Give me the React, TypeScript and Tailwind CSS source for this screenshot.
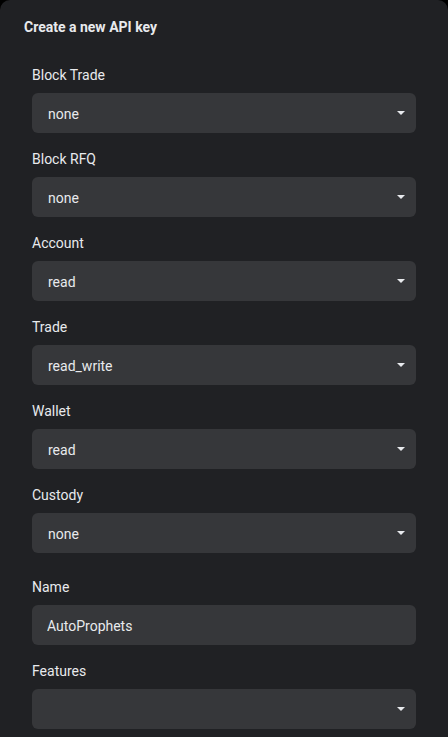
import { useState } from "react";

const PERMS = ["none", "read", "read_write"];

function Caret() {
  return (
    <svg className="w-2 h-1" viewBox="0 0 8 4" fill="currentColor">
      <path d="M0 0h8L4 4z" />
    </svg>
  );
}

function SelectField({ label, value }: { label: string; value: string }) {
  const [val, setVal] = useState(value);
  return (
    <div className="flex flex-col">
      <label className="h-5 pt-px text-sm leading-5 text-[#e8eaed] mb-[9px]">{label}</label>
      <div className="relative h-10">
        <select
          value={val}
          onChange={(e) => setVal(e.target.value)}
          className="appearance-none w-full h-10 rounded-md bg-[#36373a] pl-4 pr-10 pt-px text-sm text-[#e8eaed] outline-none"
        >
          {value === "" && <option value=""></option>}
          {PERMS.map((p) => (
            <option key={p} value={p}>
              {p}
            </option>
          ))}
        </select>
        <span className="pointer-events-none absolute right-[11px] top-[18px] text-[#e8eaed] flex">
          <Caret />
        </span>
      </div>
    </div>
  );
}

export default function App() {
  const [name, setName] = useState("AutoProphets");

  return (
    <div className="min-h-screen bg-black" style={{ fontFamily: "Roboto, 'Liberation Sans', sans-serif" }}>
      <div className="min-h-screen bg-[#202124] rounded-t-[10px] pt-[17px]">
        <h2 className="px-6 text-sm leading-5 font-bold text-[#e8eaed]">Create a new API key</h2>

        <div className="px-8 mt-[27px] flex flex-col gap-[15px]">
          <SelectField label="Block Trade" value="none" />
          <SelectField label="Block RFQ" value="none" />
          <SelectField label="Account" value="read" />
          <SelectField label="Trade" value="read_write" />
          <SelectField label="Wallet" value="read" />
          <SelectField label="Custody" value="none" />

          <div className="flex flex-col mt-[9px]">
            <label className="h-5 text-sm leading-5 text-[#e8eaed] mb-[8px]">Name</label>
            <input
              value={name}
              onChange={(e) => setName(e.target.value)}
              className="w-full h-10 rounded-md bg-[#36373a] px-[15px] pt-px text-sm text-[#e8eaed] outline-none"
            />
          </div>

          <SelectField label="Features" value="" />
        </div>
      </div>
    </div>
  );
}
